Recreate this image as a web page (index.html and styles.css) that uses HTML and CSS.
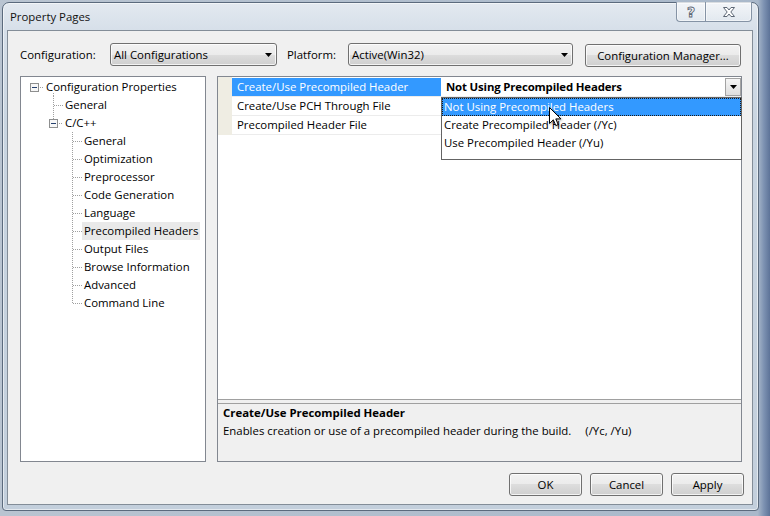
FILE: index.html
```html
<!DOCTYPE html>
<html>
<head>
<meta charset="utf-8">
<link rel="stylesheet" href="styles.css">
</head>
<body>
<div class="window">
  <div class="titlebar">
    <span class="title">Property Pages</span>
    <div class="caption">
      <div class="cbtn help"><span class="qmark">?</span></div>
      <div class="cbtn close">
        <svg width="14" height="12" viewBox="0 0 14 12"><path d="M1.5 1.5H5L7 4L9 1.5H12.5L8.8 6L12.5 10.5H9L7 8L5 10.5H1.5L5.2 6Z" fill="#fff" stroke="#5d6775" stroke-width="1" stroke-linejoin="round"/></svg>
      </div>
    </div>
  </div>
  <div class="client">
    <div class="toolbar">
      <span class="lbl lbl-config">Configuration:</span>
      <div class="combo combo-config"><span>All Configurations</span><svg class="arrow" width="7" height="4"><path d="M0 0H7L3.5 4Z" fill="#000"/></svg></div>
      <span class="lbl lbl-platform">Platform:</span>
      <div class="combo combo-platform"><span>Active(Win32)</span><svg class="arrow" width="7" height="4"><path d="M0 0H7L3.5 4Z" fill="#000"/></svg></div>
      <div class="btn btn-manager">Configuration Manager...</div>
    </div>
    <div class="main">
      <div class="tree">
        <div class="node"><svg class="lines" width="23" height="18"><rect class="box" x="9.5" y="5.5" width="8" height="8"/><path class="minus" d="M11 9.5H16"/><path class="dot" d="M19 9.5H23M32.5 15V18"/></svg><span class="label">Configuration Properties</span></div>
        <div class="node"><svg class="lines" width="42" height="18"><path class="dot" d="M32.5 0V18M33 9.5H42"/></svg><span class="label">General</span></div>
        <div class="node"><svg class="lines" width="42" height="18"><rect class="box" x="28.5" y="5.5" width="8" height="8"/><path class="minus" d="M30 9.5H35"/><path class="dot" d="M32.5 0V5M38 9.5H42"/></svg><span class="label">C/C++</span></div>
        <div class="node"><svg class="lines" width="61" height="18"><path class="dot" d="M51.5 0V18M52 9.5H61"/></svg><span class="label">General</span></div>
        <div class="node"><svg class="lines" width="61" height="18"><path class="dot" d="M51.5 0V18M52 9.5H61"/></svg><span class="label">Optimization</span></div>
        <div class="node"><svg class="lines" width="61" height="18"><path class="dot" d="M51.5 0V18M52 9.5H61"/></svg><span class="label">Preprocessor</span></div>
        <div class="node"><svg class="lines" width="61" height="18"><path class="dot" d="M51.5 0V18M52 9.5H61"/></svg><span class="label">Code Generation</span></div>
        <div class="node"><svg class="lines" width="61" height="18"><path class="dot" d="M51.5 0V18M52 9.5H61"/></svg><span class="label">Language</span></div>
        <div class="node"><svg class="lines" width="61" height="18"><path class="dot" d="M51.5 0V18M52 9.5H61"/></svg><span class="label selected">Precompiled Headers</span></div>
        <div class="node"><svg class="lines" width="61" height="18"><path class="dot" d="M51.5 0V18M52 9.5H61"/></svg><span class="label">Output Files</span></div>
        <div class="node"><svg class="lines" width="61" height="18"><path class="dot" d="M51.5 0V18M52 9.5H61"/></svg><span class="label">Browse Information</span></div>
        <div class="node"><svg class="lines" width="61" height="18"><path class="dot" d="M51.5 0V18M52 9.5H61"/></svg><span class="label">Advanced</span></div>
        <div class="node"><svg class="lines" width="61" height="18"><path class="dot" d="M51.5 0V10M52 9.5H61"/></svg><span class="label">Command Line</span></div>
      </div>
      <div class="props">
        <div class="grid">
          <div class="rows">
            <div class="prow sel">
              <div class="gut"></div>
              <div class="name">Create/Use Precompiled Header</div>
              <div class="value"><b>Not Using Precompiled Headers</b><span class="ddbtn"><svg width="7" height="4"><path d="M0 0H7L3.5 4Z" fill="#000"/></svg></span></div>
            </div>
            <div class="prow">
              <div class="gut"></div>
              <div class="name">Create/Use PCH Through File</div>
              <div class="value"></div>
            </div>
            <div class="prow">
              <div class="gut"></div>
              <div class="name">Precompiled Header File</div>
              <div class="value"></div>
            </div>
          </div>
          <div class="droplist">
            <div class="opt hi">Not Using Precompiled Headers</div>
            <div class="opt">Create Precompiled Header (/Yc)</div>
            <div class="opt">Use Precompiled Header (/Yu)</div>
            <svg class="cursor" width="13" height="20" viewBox="0 0 13 20"><path d="M0.5 0.5V16.5L4.3 12.8L6.8 18.6L9.2 17.6L6.8 11.9H11.9Z" fill="#fff" stroke="#000" stroke-width="1" stroke-linejoin="miter"/></svg>
          </div>
        </div>
        <div class="desc">
          <div class="desc-title">Create/Use Precompiled Header</div>
          <div class="desc-text">Enables creation or use of a precompiled header during the build.<span class="switch">(/Yc, /Yu)</span></div>
        </div>
      </div>
    </div>
    <div class="actions">
      <div class="btn btn-action">OK</div>
      <div class="btn btn-action">Cancel</div>
      <div class="btn btn-action">Apply</div>
    </div>
  </div>
</div>
</body>
</html>
```
FILE: styles.css
```css
html, body {
  margin: 0;
  padding: 0;
}
body {
  width: 770px;
  height: 516px;
  overflow: hidden;
  background: linear-gradient(90deg, #b9c4d1 0%, #a9b8ca 98.4%, #7d92b2 99.2%, #5d7398 100%);
  font-family: "Open Sans", "Noto Sans", sans-serif;
  font-size: 11.4px;
  color: #000;
}
.window {
  box-sizing: border-box;
  width: 757px;
  height: 509px;
  margin: 2px 0 0 2px;
  padding: 0 5px 5px 4px;
  border: 1px solid #5b6a7d;
  border-radius: 7px 7px 4px 4px;
  background: linear-gradient(180deg, #e3e9f0 0px, #d6dfe9 28px, #c9d5e1 120px, #c3cfdc 100%);
  box-shadow: inset 0 0 0 1px rgba(255,255,255,0.55);
}
.titlebar {
  height: 27px;
  display: flex;
  align-items: center;
}
.title {
  padding-left: 3px;
  color: #111;
}
.caption {
  margin-left: auto;
  margin-right: 1px;
  align-self: flex-start;
  margin-top: -1px;
  display: flex;
  height: 20px;
}
.cbtn {
  box-sizing: border-box;
  height: 20px;
  display: flex;
  align-items: center;
  justify-content: center;
  border: 1px solid #8593a5;
  border-top: none;
  background: linear-gradient(180deg, rgba(255,255,255,0.55), rgba(255,255,255,0.2));
  box-shadow: inset 0 0 0 1px rgba(255,255,255,0.5);
}
.help {
  width: 29px;
  border-radius: 0 0 0 4px;
  border-right: none;
}
.close {
  width: 47px;
  border-radius: 0 0 4px 0;
}
.qmark {
  font-family: "DejaVu Sans", sans-serif;
  font-weight: bold;
  font-size: 14px;
  line-height: 14px;
  color: #fff;
  -webkit-text-stroke: 0.9px #5d6775;
}
.client {
  box-sizing: border-box;
  height: 475px;
  border: 1px solid #838d98;
  background: #f0f0f0;
  display: flex;
  flex-direction: column;
}
.toolbar {
  display: flex;
  align-items: center;
  height: 23px;
  margin-top: 12px;
  padding-left: 12px;
}
.lbl {
  flex: none;
  white-space: nowrap;
}
.lbl-config { width: 90px; }
.lbl-platform { width: 61px; margin-left: 10px; }
.combo, .btn {
  box-sizing: border-box;
  height: 23px;
  border: 1px solid #707070;
  border-radius: 3px;
  background: linear-gradient(180deg, #f2f2f2 0%, #ebebeb 50%, #dddddd 50%, #cfcfcf 100%);
  box-shadow: inset 0 0 0 1px rgba(255,255,255,0.75);
  white-space: nowrap;
}
.combo {
  flex: none;
  display: flex;
  align-items: center;
  padding-left: 3px;
  padding-right: 4px;
}
.combo .arrow {
  margin-left: auto;
}
.combo-config { width: 167px; }
.combo-platform { width: 225px; }
.btn {
  flex: none;
  display: flex;
  align-items: center;
  justify-content: center;
}
.btn-manager {
  width: 156px;
  margin-left: 12px;
  margin-top: 2px;
}
.main {
  display: flex;
  height: 386px;
  margin-top: 10px;
  padding-left: 12px;
}
.tree {
  box-sizing: border-box;
  width: 186px;
  height: 386px;
  border: 1px solid #828790;
  background: #fff;
  padding-top: 1px;
  flex: none;
}
.node {
  display: flex;
  align-items: center;
  height: 18px;
}
.lines {
  flex: none;
  overflow: visible;
  display: block;
}
.dot {
  fill: none;
  stroke: #a0a0a0;
  stroke-width: 1;
  stroke-dasharray: 1 1;
  shape-rendering: crispEdges;
}
.box {
  fill: #f7f7f7;
  stroke: #8e8f8f;
  stroke-width: 1;
  shape-rendering: crispEdges;
}
.minus {
  stroke: #25406e;
  stroke-width: 1;
  shape-rendering: crispEdges;
}
.label {
  padding: 0 2px;
  line-height: 18px;
  white-space: nowrap;
}
.label.selected {
  background: #e9e9e9;
}
.props {
  box-sizing: border-box;
  width: 525px;
  height: 386px;
  margin-left: 11px;
  border: 1px solid #828790;
  background: #f0f0f0;
  flex: none;
}
.grid {
  position: relative;
  box-sizing: border-box;
  height: 323px;
  background: #fff;
  border-bottom: 1px solid #a0a0a0;
}
.rows {
  padding-top: 1px;
  background: linear-gradient(90deg, #efede3 14px, #ffffff 14px);
}
.prow {
  display: grid;
  grid-template-columns: 14px 209px 300px;
  height: 19px;
}
.name, .value {
  box-sizing: border-box;
  height: 19px;
  line-height: 18px;
  border-bottom: 1px solid #ececec;
  padding-left: 5px;
  white-space: nowrap;
}
.sel .name {
  background: #3399ff;
  color: #fff;
}
.value {
  display: flex;
  align-items: center;
  background: #fff;
}
.value b {
  font-weight: bold;
  letter-spacing: -0.15px;
}
.ddbtn {
  margin-left: auto;
  box-sizing: border-box;
  width: 16px;
  height: 18px;
  border: 1px solid #a3a3a3;
  background: linear-gradient(180deg, #f6f6f6, #dedede);
  display: flex;
  align-items: center;
  justify-content: center;
}
.droplist {
  position: absolute;
  left: 223px;
  top: 20px;
  box-sizing: border-box;
  width: 301px;
  border: 1px solid #646464;
  background: #fff;
  padding-bottom: 7px;
}
.opt {
  height: 18px;
  line-height: 18px;
  padding-left: 2px;
  white-space: nowrap;
}
.opt.hi {
  background: #3399ff;
  color: #fff;
  outline: 1px dotted #1a1a1a;
  outline-offset: -1px;
}
.cursor {
  position: absolute;
  left: 107px;
  top: 9px;
  overflow: visible;
  filter: drop-shadow(1px 1px 1px rgba(0,0,0,0.35));
}
.desc {
  box-sizing: border-box;
  height: 61px;
  margin-top: 3px;
  border-top: 1px solid #a0a0a0;
  padding: 0 5px;
  line-height: 18px;
}
.desc-title {
  font-weight: bold;
}
.switch {
  margin-left: 14px;
}
.actions {
  display: flex;
  justify-content: flex-end;
  gap: 8px;
  margin-top: 11px;
  padding-right: 8px;
}
.btn-action {
  width: 73px;
}
```
